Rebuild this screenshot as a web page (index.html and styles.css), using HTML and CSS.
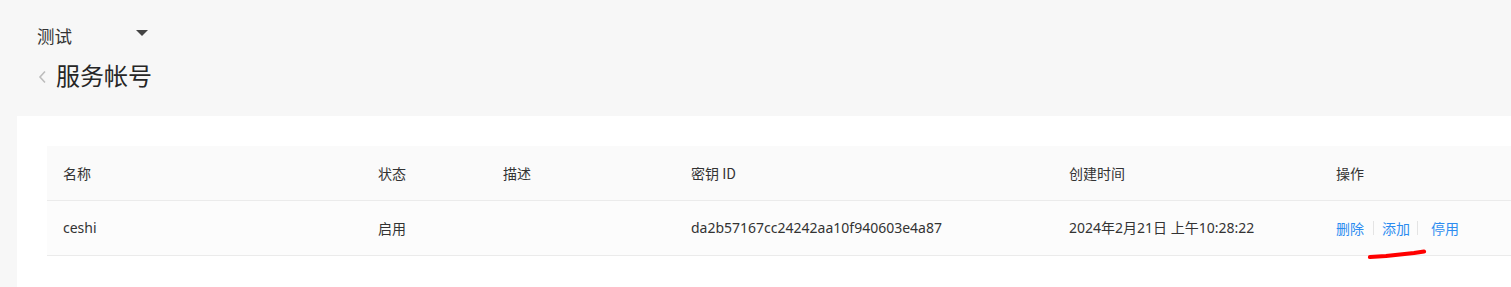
FILE: index.html
```html
<!DOCTYPE html>
<html lang="zh-CN">
<head>
<meta charset="utf-8">
<title>服务帐号</title>
<link rel="stylesheet" href="styles.css">
</head>
<body>
<div class="page">
  <div class="topbar">
    <div class="project-select">
      <span class="project-name">测试</span>
      <span class="caret"></span>
    </div>
    <div class="title-row">
      <svg class="back" width="10" height="14" viewBox="0 0 10 14"><path d="M8 1.5 L3 7 L8 12.5" fill="none" stroke="#bdbdbd" stroke-width="1.6"/></svg>
      <h1 class="title">服务帐号</h1>
    </div>
  </div>
  <div class="panel">
    <div class="table">
      <div class="tr thead">
        <div class="td c1">名称</div>
        <div class="td c2">状态</div>
        <div class="td c3">描述</div>
        <div class="td c4">密钥 ID</div>
        <div class="td c5">创建时间</div>
        <div class="td c6">操作</div>
      </div>
      <div class="tr tbody">
        <div class="td c1">ceshi</div>
        <div class="td c2">启用</div>
        <div class="td c3"></div>
        <div class="td c4">da2b57167cc24242aa10f940603e4a87</div>
        <div class="td c5">2024年2月21日 上午10:28:22</div>
        <div class="td c6 actions">
          <a class="link">删除</a><span class="sep"></span><a class="link">添加</a><span class="sep sep-wide"></span><a class="link">停用</a>
        </div>
      </div>
    </div>
  </div>
  <svg class="annotation" width="64" height="14" viewBox="0 0 64 14"><path d="M4 10 L20 9 L34 7.5 L48 6 L58 4.5" fill="none" stroke="#ff0000" stroke-width="4.2" stroke-linecap="round" stroke-linejoin="round"/></svg>
</div>
</body>
</html>
```
FILE: styles.css
```css
html, body {
  margin: 0;
  padding: 0;
  background: #f7f7f7;
}
body {
  font-family: "Noto Sans", "Noto Sans CJK SC", sans-serif;
  color: #333;
  width: 1511px;
  height: 287px;
  overflow: hidden;
}
.page {
  position: relative;
  height: 287px;
}
.topbar {
  padding: 22px 0 0 37px;
  height: 92px;
  box-sizing: border-box;
}
.project-select {
  display: flex;
  align-items: center;
  height: 26px;
  width: 111px;
  justify-content: space-between;
}
.project-name {
  font-family: "Noto Sans CJK SC", sans-serif;
  font-size: 17.5px;
  line-height: 26px;
  color: #333;
  margin-top: 2px;
}
.caret {
  width: 0;
  height: 0;
  border-left: 6px solid transparent;
  border-right: 6px solid transparent;
  border-top: 6px solid #444;
  margin-top: -5px;
}
.title-row {
  display: flex;
  align-items: center;
  margin-top: 12px;
  height: 30px;
}
.back {
  margin: 4px 9px 0 0;
}
.title {
  margin: 0;
  font-family: "Noto Sans CJK SC", sans-serif;
  font-weight: normal;
  font-size: 24px;
  line-height: 30px;
  color: #262626;
}
.panel {
  margin-left: 17px;
  background: #fff;
  margin-top: 24px;
  height: 171px;
  padding: 30px 0 0 30px;
  box-sizing: border-box;
}
.table {
  width: 1500px;
  font-size: 14px;
}
.tr {
  display: flex;
  height: 55px;
  align-items: center;
  border-bottom: 1px solid #ebebeb;
  box-sizing: border-box;
}
.thead {
  background: #fafafa;
}
.tbody {
  background: #fcfcfc;
}
.td {
  padding-left: 16px;
  box-sizing: border-box;
  white-space: nowrap;
  font-family: "Noto Sans", "Noto Sans CJK SC", sans-serif;
  line-height: 20px;
}
.thead .td {
  font-family: "Noto Sans CJK SC", sans-serif;
  font-size: 14px;
}
.c1 { width: 315px; }
.c2 { width: 125px; font-family: "Noto Sans CJK SC", sans-serif; }
.c3 { width: 188px; }
.c4 { width: 378px; }
.c5 { width: 267px; }
.c6 { flex: 1; }
.actions {
  display: flex;
  align-items: center;
}
.link {
  color: #2d8cf0;
  font-family: "Noto Sans CJK SC", sans-serif;
  font-size: 14px;
  cursor: pointer;
}
.sep {
  display: inline-block;
  width: 1px;
  height: 14px;
  background: #e4e4e4;
  margin: 0 8px 0 9px;
}
.sep-wide {
  margin: 0 13px 0 7px;
}
.annotation {
  position: absolute;
  left: 1366px;
  top: 247px;
}
```
